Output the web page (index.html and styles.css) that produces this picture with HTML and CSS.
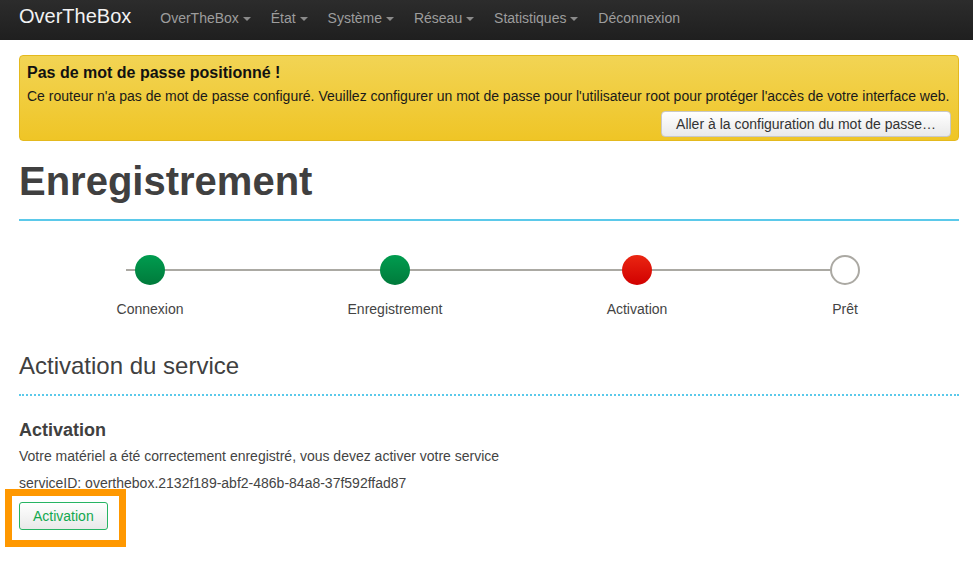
FILE: index.html
```html
<!DOCTYPE html>
<html lang="fr">
<head>
<meta charset="utf-8">
<title>OverTheBox - Enregistrement</title>
<link rel="stylesheet" href="styles.css">
</head>
<body>
<header class="navbar">
  <a class="brand" href="#">OverTheBox</a>
  <nav class="nav">
    <a class="nav-link" href="#">OverTheBox <span class="caret"></span></a>
    <a class="nav-link" href="#">État <span class="caret"></span></a>
    <a class="nav-link" href="#">Système <span class="caret"></span></a>
    <a class="nav-link" href="#">Réseau <span class="caret"></span></a>
    <a class="nav-link" href="#">Statistiques <span class="caret"></span></a>
    <a class="nav-link" href="#">Déconnexion</a>
  </nav>
</header>

<main class="container">
  <div class="alert">
    <div class="alert-title">Pas de mot de passe positionné !</div>
    <div class="alert-text">Ce routeur n'a pas de mot de passe configuré. Veuillez configurer un mot de passe pour l'utilisateur root pour protéger l'accès de votre interface web.</div>
    <div class="alert-actions">
      <button class="btn">Aller à la configuration du mot de passe…</button>
    </div>
  </div>

  <h1 class="page-title">Enregistrement</h1>

  <div class="stepper">
    <div class="step"><span class="dot dot-done"></span><span class="step-label">Connexion</span></div>
    <div class="step"><span class="dot dot-done"></span><span class="step-label">Enregistrement</span></div>
    <div class="step"><span class="dot dot-current"></span><span class="step-label">Activation</span></div>
    <div class="step"><span class="dot dot-todo"></span><span class="step-label">Prêt</span></div>
  </div>

  <h2 class="section-title">Activation du service</h2>

  <h3 class="sub-title">Activation</h3>
  <p class="text">Votre matériel a été correctement enregistré, vous devez activer votre service</p>
  <p class="text">serviceID: overthebox.2132f189-abf2-486b-84a8-37f592ffad87</p>
  <div class="action">
    <button class="btn btn-success">Activation</button>
    <span class="highlight"></span>
  </div>
</main>
</body>
</html>
```

FILE: styles.css
```css
* { box-sizing: border-box; }

html, body {
  margin: 0;
  padding: 0;
  background: #fff;
  font-family: "Liberation Sans", Arial, sans-serif;
  font-size: 14px;
  color: #444;
}

.navbar {
  height: 40px;
  display: flex;
  align-items: flex-start;
  padding-left: 19px;
  background: linear-gradient(#2c2c2c, #1f1f1f);
}

.brand {
  font-size: 20px;
  line-height: 20px;
  padding-top: 6px;
  margin-right: 19px;
  color: #f2f2f2;
  text-decoration: none;
}

.nav {
  display: flex;
}

.nav-link {
  padding: 8px 10px 12px;
  line-height: 20px;
  font-size: 14px;
  color: #9d9d9d;
  text-decoration: none;
  white-space: nowrap;
}

.caret {
  display: inline-block;
  width: 0;
  height: 0;
  vertical-align: middle;
  border-top: 4px solid #8a8a8a;
  border-left: 4px solid transparent;
  border-right: 4px solid transparent;
  margin-top: -1px;
}

.container {
  width: 940px;
  margin-left: 19px;
  padding-bottom: 40px;
}

.alert {
  margin-top: 15px;
  border: 1px solid #e4b91e;
  border-radius: 4px;
  padding: 7px 7px 3px 7px;
  background: linear-gradient(#f2d454, #efc526);
  color: #1a1a1a;
}

.alert-title {
  font-size: 16px;
  font-weight: bold;
  line-height: 20px;
  margin-bottom: 3px;
  color: #111;
}

.alert-text {
  line-height: 20px;
}

.alert-actions {
  display: flex;
  justify-content: flex-end;
  margin-top: 5px;
}

.btn {
  font-family: "Liberation Sans", Arial, sans-serif;
  font-size: 14px;
  line-height: 18px;
  padding: 3px 14px;
  color: #333;
  background: linear-gradient(#ffffff, #e9e9e9);
  border: 1px solid #c8c8c8;
  border-radius: 4px;
  cursor: pointer;
}

.page-title {
  margin: 18px 0 0;
  padding-bottom: 16px;
  font-size: 40px;
  line-height: 44px;
  font-weight: bold;
  color: #404040;
  border-bottom: 2px solid #5bc9ea;
}

.stepper {
  position: relative;
  display: grid;
  grid-template-columns: 194px 296px 188px 228px;
  padding-left: 34px;
  margin-top: 34px;
}

.stepper::before {
  content: "";
  position: absolute;
  left: 107px;
  top: 14px;
  width: 705px;
  height: 2px;
  background: #aba9a3;
}

.step {
  display: flex;
  flex-direction: column;
  align-items: center;
  position: relative;
}

.dot {
  width: 30px;
  height: 30px;
  border-radius: 50%;
}

.dot-done {
  background: linear-gradient(#009c4f, #007a3b);
}

.dot-current {
  background: linear-gradient(#ea2612, #d10000);
}

.dot-todo {
  background: #fff;
  border: 2px solid #aba9a3;
}

.step-label {
  margin-top: 14px;
  line-height: 20px;
  color: #444;
}

.section-title {
  margin: 32px 0 0;
  padding-bottom: 13px;
  font-size: 24px;
  line-height: 30px;
  font-weight: normal;
  color: #404040;
  border-bottom: 2px dotted #5bc9ea;
}

.sub-title {
  margin: 23px 0 0;
  font-size: 18px;
  line-height: 22px;
  font-weight: bold;
  color: #404040;
}

.text {
  margin: 0;
  line-height: 27px;
  color: #444;
}

.sub-title + .text {
  margin-top: 2px;
}

.action {
  position: relative;
  display: flex;
  margin-top: 5px;
}

.btn-success {
  padding: 4px 13px;
  color: #13a84f;
  border-color: #27b463;
  border-radius: 3px;
}

.highlight {
  position: absolute;
  left: -14px;
  top: -13px;
  width: 121px;
  height: 58px;
  border: 7px solid #ff9800;
  pointer-events: none;
}
```
